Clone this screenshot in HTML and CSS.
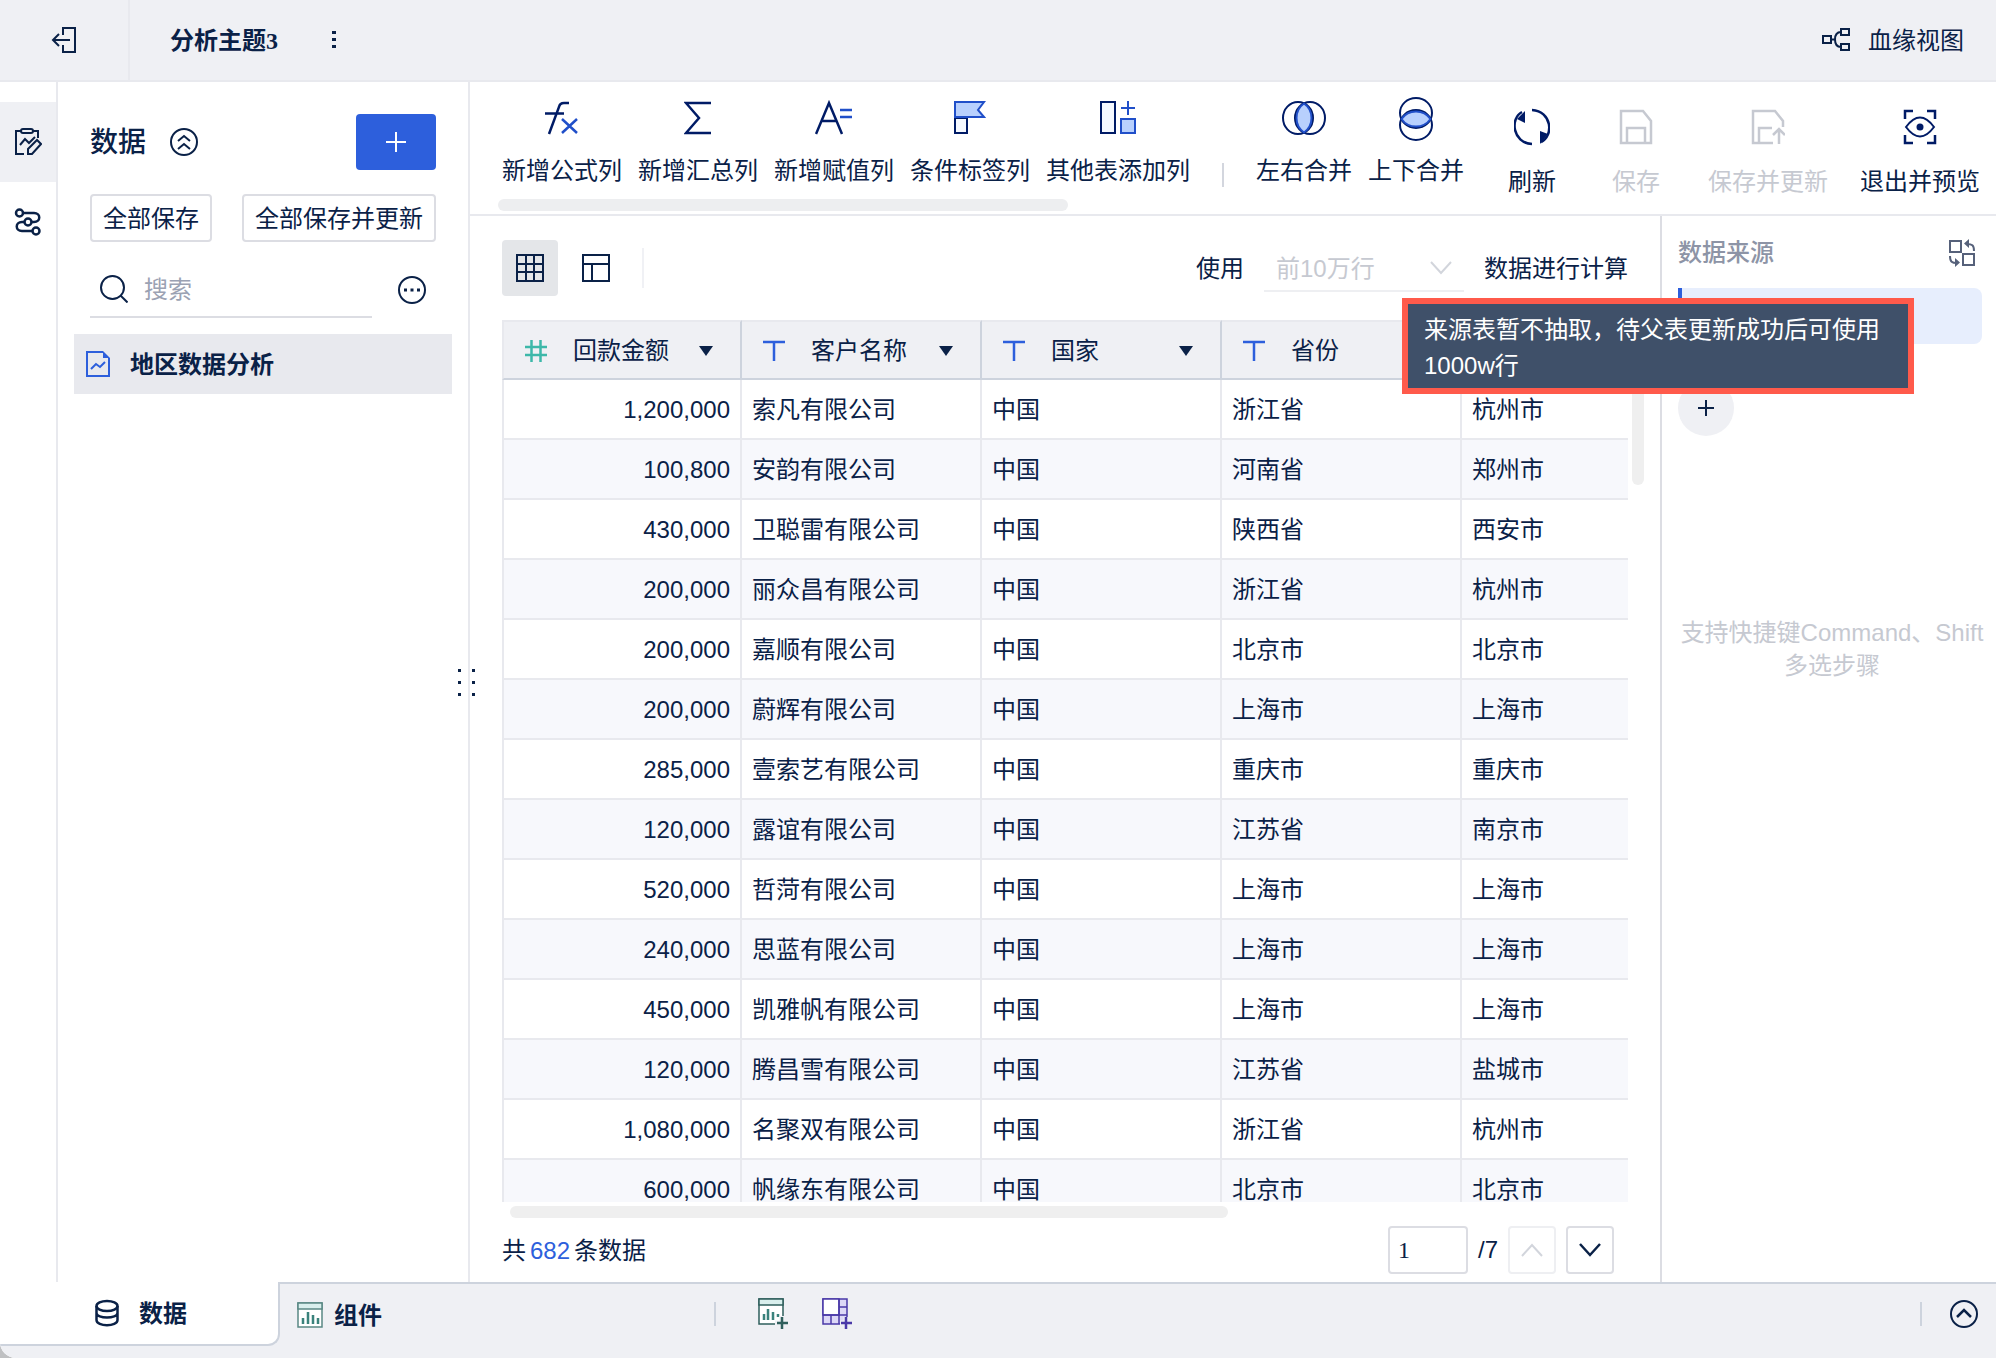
FILE: index.html
```html
<!DOCTYPE html>
<html lang="zh-CN">
<head>
    <meta charset="UTF-8" />
    <meta name="viewport" content="width=device-width, initial-scale=1.0" />
    <title>分析主题3</title>
    <link rel="stylesheet" href="styles.css">
</head>
<body>
<div class="app">
    <header class="topbar">
        <button class="exit" aria-label="退出">
            <svg width="28" height="28" viewBox="0 0 28 28" fill="none" stroke="currentColor" stroke-width="2"><path d="M13 9V2h12v24H13v-7M20 14H3M9 8l-6 6 6 6"/></svg>
        </button>
        <h1 class="title">分析主题3</h1>
        <button class="more" aria-label="更多">
            <svg width="4" height="18" viewBox="0 0 4 18" fill="currentColor"><path d="M0 0h4v3H0zM0 7h4v3H0zM0 14h4v3H0z"/></svg>
        </button>
        <a class="lineage" href="#">
            <svg width="28" height="26" viewBox="0 0 28 26" fill="none" stroke="currentColor" stroke-width="2"><path d="M1 9h8v7H1zM19 2h8v6h-8zM19 17h8v6h-8zM9 12.500h4M19 5c-4 0-6 2-6 7.500S15 20 19 20"/></svg>
            <span>血缘视图</span>
        </a>
    </header>

    <div class="body">
        <nav class="rail">
            <a class="rail-item active" href="#" aria-label="编辑">
                <svg width="28" height="28" viewBox="0 0 28 28" fill="none" stroke="currentColor" stroke-width="2"><path d="M7 3H2v23h8M19 3h5v7"/><rect x="7" y="1" width="12" height="4" rx="2"/><path d="M6 17l5-6 4 4 6-6M14 26v-5l9-9 4 4-9 10z"/></svg>
            </a>
            <a class="rail-item" href="#" aria-label="流程">
                <svg width="28" height="28" viewBox="0 0 28 28" fill="none" stroke="currentColor" stroke-width="2.500"><circle cx="5.500" cy="5" r="3.500"/><circle cx="14" cy="14" r="3.500"/><circle cx="22" cy="23" r="3.500"/><path d="M9 5h11c7 0 7 9 0 9h-2.500M10.500 14H8c-7 0-7 9 0 9h10.500"/></svg>
            </a>
        </nav>

        <aside class="sidebar">
            <div class="sidebar-head">
                <h2>数据</h2>
                <button class="icon-btn" aria-label="收起">
                    <svg width="28" height="28" viewBox="0 0 28 28" fill="none" stroke="currentColor" stroke-width="2"><circle cx="14" cy="14" r="13"/><path d="M8 13l6-5 6 5M8 21l6-5 6 5"/></svg>
                </button>
                <button class="add-btn" aria-label="添加">
                    <svg width="20" height="20" viewBox="0 0 20 20" fill="none" stroke="currentColor" stroke-width="2"><path d="M0 10h20M10 0v20"/></svg>
                </button>
            </div>
            <div class="save-row">
                <button class="plain-btn">全部保存</button>
                <button class="plain-btn">全部保存并更新</button>
            </div>
            <div class="search-row">
                <label class="search">
                    <svg width="28" height="28" viewBox="0 0 28 28" fill="none" stroke="currentColor" stroke-width="2"><circle cx="12.500" cy="12.500" r="11.500"/><path d="M20.500 20.500l7 7"/></svg>
                    <input type="text" placeholder="搜索" aria-label="搜索">
                </label>
                <button class="icon-btn" aria-label="更多操作">
                    <svg width="28" height="28" viewBox="0 0 28 28" fill="none" stroke="currentColor" stroke-width="2"><circle cx="14" cy="14" r="13"/><path d="M6 14h3M12.500 14h3M19 14h3" stroke-width="3"/></svg>
                </button>
            </div>
            <a class="file-item" href="#">
                <svg width="26" height="28" viewBox="0 0 26 28" fill="none" stroke="#2d5fdc" stroke-width="2"><path d="M18 2H2v24h22V8"/><path d="M18 1l7 7h-7z" fill="#2d5fdc" stroke="none"/><path d="M6 19l5-5 4 3 5-5"/></svg>
                <span>地区数据分析</span>
            </a>
        </aside>

        <div class="workspace">
            <div class="toolbar">
                <div class="tools">
                    <button class="tool">
                        <svg width="36" height="46" viewBox="0 0 36 46" fill="none" stroke="#001b66" stroke-width="2.500"><path d="M25 7h-5c-3 0-4.500 1.500-5 4L5 38M1 17.500h19" /><path d="M18 23l15 14M33 23L18 37" stroke="#204fc9"/></svg>
                        新增公式列
                    </button>
                    <button class="tool">
                        <svg width="28" height="46" viewBox="0 0 28 46" fill="none" stroke="#001b66" stroke-width="2.500"><path d="M27 7H2l13 15L2 37h25"/></svg>
                        新增汇总列
                    </button>
                    <button class="tool">
                        <svg width="38" height="46" viewBox="0 0 38 46" fill="none" stroke="#001b66" stroke-width="2.500"><path d="M1 38L14 7l13 31M6 25h16"/><path d="M25 14h12M25 21h12" stroke="#204fc9"/></svg>
                        新增赋值列
                    </button>
                    <button class="tool">
                        <svg width="32" height="46" viewBox="0 0 32 46" stroke="#001b66" stroke-width="2"><path d="M1 22h12v15H1z" fill="#f5f9ff"/><path d="M1 6h29l-6 8 6 7H1z" fill="#b8d0fd" stroke="#204fc9"/></svg>
                        条件标签列
                    </button>
                    <button class="tool">
                        <svg width="36" height="46" viewBox="0 0 36 46" stroke="#001b66" stroke-width="2"><path d="M1 6h14v31H1z" fill="#f5f9ff"/><path d="M21 23h14v14H21z" fill="#b8d0fd" stroke="#204fc9"/><path d="M28 5v14M21 12h14" stroke="#204fc9"/></svg>
                        其他表添加列
                    </button>
                    <span class="tool-divider"></span>
                    <button class="tool">
                        <svg width="44" height="46" viewBox="0 0 44 46" fill="none" stroke="#001b66" stroke-width="2"><ellipse cx="16" cy="22" rx="15" ry="16"/><ellipse cx="28" cy="22" rx="15" ry="16"/><path d="M22 7.500c10 7 10 22 0 29-10-7-10-22 0-29z" fill="#b8d0fd" stroke="#204fc9"/></svg>
                        左右合并
                    </button>
                    <button class="tool">
                        <svg width="36" height="46" viewBox="0 0 36 46" fill="none" stroke="#001b66" stroke-width="2"><ellipse cx="18" cy="17" rx="16" ry="15"/><ellipse cx="18" cy="29" rx="16" ry="15"/><path d="M3.500 23c7-10 22-10 29 0-7 10-22 10-29 0z" fill="#b8d0fd" stroke="#204fc9"/></svg>
                        上下合并
                    </button>
                    <div class="tools-scroll"></div>
                </div>
                <div class="actions">
                    <button class="action refresh">
                        <svg width="36" height="38" viewBox="0 0 36 38" fill="none" stroke="#001b66" stroke-width="2.500"><path d="M18 2c20 1 22 26 9 32M18 36C-2 35-4 10 8 4"/><path d="M3 11l8-8v12zM26 23l8 3-8 10z" fill="#001b66" stroke="none"/></svg>
                        刷新
                    </button>
                    <button class="action save" disabled>
                        <svg width="34" height="38" viewBox="0 0 34 38" fill="none" stroke="currentColor" stroke-width="2.500"><path d="M2 3h22l8 10v22H2zM8 35V20h18v15"/></svg>
                        保存
                    </button>
                    <button class="action" disabled>
                        <svg width="34" height="38" viewBox="0 0 34 38" fill="none" stroke="currentColor" stroke-width="2.500"><path d="M22 35H2V3h22l8 10v6M8 35V20h13M28 36V22M22 27l6-6 6 6"/></svg>
                        保存并更新
                    </button>
                    <button class="action">
                        <svg width="34" height="38" viewBox="0 0 34 38" fill="none" stroke="#001b66" stroke-width="2.500"><path d="M2 11V3h8M24 3h8v8M32 27v8h-8M10 35H2v-8"/><path d="M3 19q14-19 28 0-14 19-28 0z" stroke-width="2"/><circle cx="17" cy="19" r="3.500" fill="#001b66" stroke="none"/></svg>
                        退出并预览
                    </button>
                </div>
            </div>

            <div class="content">
                <main class="main">
                    <div class="view-row">
                        <button class="view-btn active" aria-label="表格视图">
                            <svg width="28" height="28" viewBox="0 0 28 28" fill="none" stroke="currentColor" stroke-width="2"><path d="M1 1h26v26H1zM1 10h26M1 18h26M10 1v26M18 1v26"/></svg>
                        </button>
                        <button class="view-btn" aria-label="布局视图">
                            <svg width="28" height="28" viewBox="0 0 28 28" fill="none" stroke="currentColor" stroke-width="2"><path d="M1 1h26v26H1zM1 10h26M10 10v17"/></svg>
                        </button>
                        <span class="view-divider"></span>
                        <div class="calc">
                            <label for="rowLimit">使用</label>
                            <span class="select-box">
                                <select id="rowLimit" disabled>
                                    <option>前10万行</option>
                                </select>
                                <svg width="22" height="14" viewBox="0 0 22 14" fill="none" stroke="#d2d5dc" stroke-width="2"><path d="M1 1l10 11L21 1"/></svg>
                            </span>
                            <span>数据进行计算</span>
                        </div>
                    </div>

                    <div class="table-area">
                        <div class="table-wrap">
                            <table>
                                <thead>
                                    <tr>
                                        <th><div class="th"><svg width="22" height="22" viewBox="0 0 22 22" fill="none" stroke="#3db8a9" stroke-width="2.500"><path d="M0 7h22M0 15h22M6.500 0v22M15.500 0v22"/></svg>回款金额<i class="caret"></i></div></th>
                                        <th><div class="th"><svg width="22" height="22" viewBox="0 0 22 22" fill="none" stroke="#2d5fdc" stroke-width="2.500"><path d="M0 2h22M11 2v19"/></svg>客户名称<i class="caret"></i></div></th>
                                        <th><div class="th"><svg width="22" height="22" viewBox="0 0 22 22" fill="none" stroke="#2d5fdc" stroke-width="2.500"><path d="M0 2h22M11 2v19"/></svg>国家<i class="caret"></i></div></th>
                                        <th><div class="th"><svg width="22" height="22" viewBox="0 0 22 22" fill="none" stroke="#2d5fdc" stroke-width="2.500"><path d="M0 2h22M11 2v19"/></svg>省份<i class="caret"></i></div></th>
                                        <th></th>
                                    </tr>
                                </thead>
                                <tbody>
                                    <tr><td>1,200,000</td><td>索凡有限公司</td><td>中国</td><td>浙江省</td><td>杭州市</td></tr>
                                    <tr><td>100,800</td><td>安韵有限公司</td><td>中国</td><td>河南省</td><td>郑州市</td></tr>
                                    <tr><td>430,000</td><td>卫聪雷有限公司</td><td>中国</td><td>陕西省</td><td>西安市</td></tr>
                                    <tr><td>200,000</td><td>丽众昌有限公司</td><td>中国</td><td>浙江省</td><td>杭州市</td></tr>
                                    <tr><td>200,000</td><td>嘉顺有限公司</td><td>中国</td><td>北京市</td><td>北京市</td></tr>
                                    <tr><td>200,000</td><td>蔚辉有限公司</td><td>中国</td><td>上海市</td><td>上海市</td></tr>
                                    <tr><td>285,000</td><td>壹索艺有限公司</td><td>中国</td><td>重庆市</td><td>重庆市</td></tr>
                                    <tr><td>120,000</td><td>露谊有限公司</td><td>中国</td><td>江苏省</td><td>南京市</td></tr>
                                    <tr><td>520,000</td><td>哲菏有限公司</td><td>中国</td><td>上海市</td><td>上海市</td></tr>
                                    <tr><td>240,000</td><td>思蓝有限公司</td><td>中国</td><td>上海市</td><td>上海市</td></tr>
                                    <tr><td>450,000</td><td>凯雅帆有限公司</td><td>中国</td><td>上海市</td><td>上海市</td></tr>
                                    <tr><td>120,000</td><td>腾昌雪有限公司</td><td>中国</td><td>江苏省</td><td>盐城市</td></tr>
                                    <tr><td>1,080,000</td><td>名聚双有限公司</td><td>中国</td><td>浙江省</td><td>杭州市</td></tr>
                                    <tr><td>600,000</td><td>帆缘东有限公司</td><td>中国</td><td>北京市</td><td>北京市</td></tr>
                                </tbody>
                            </table>
                        </div>
                        <div class="v-scroll"></div>
                    </div>
                    <div class="h-scroll"></div>

                    <div class="pager">
                        <p class="total">共<b>682</b>条数据</p>
                        <input type="text" value="1" aria-label="页码">
                        <span>/7</span>
                        <button class="page-btn" disabled aria-label="上一页">
                            <svg width="22" height="14" viewBox="0 0 22 14" fill="none" stroke="currentColor" stroke-width="2"><path d="M1 13L11 2l10 11"/></svg>
                        </button>
                        <button class="page-btn" aria-label="下一页">
                            <svg width="22" height="14" viewBox="0 0 22 14" fill="none" stroke="currentColor" stroke-width="2.500"><path d="M1 1l10 11L21 1"/></svg>
                        </button>
                    </div>
                </main>

                <aside class="source">
                    <div class="source-head">
                        <h3>数据来源</h3>
                        <button class="icon-btn" aria-label="切换">
                            <svg width="26" height="28" viewBox="0 0 26 28" fill="none" stroke="#56617a" stroke-width="2"><path d="M1 2h11v11H1zM14 15h11v11H14zM25 12c0-6-2-7-7-7M1 17c0 6 2 7 7 7"/><path d="M20 0v9l-5-4.500zM6 19v9l5-4.500z" fill="#56617a" stroke="none"/></svg>
                        </button>
                    </div>
                    <div class="source-card"></div>
                    <button class="step-add" aria-label="添加步骤">
                        <svg width="16" height="16" viewBox="0 0 16 16" fill="none" stroke="currentColor" stroke-width="2"><path d="M0 8h16M8 0v16"/></svg>
                    </button>
                    <p class="hint">支持快捷键Command、Shift多选步骤</p>
                </aside>

                <div class="tooltip" role="tooltip">来源表暂不抽取，待父表更新成功后可使用1000w行</div>
            </div>

            <div class="drag"><i></i><i></i><i></i><i></i><i></i><i></i></div>
        </div>
    </div>

    <footer class="tabbar">
        <a class="tab active" href="#">
            <svg width="24" height="28" viewBox="0 0 24 28" fill="none" stroke="currentColor" stroke-width="2.500"><ellipse cx="12" cy="7" rx="10.500" ry="5"/><path d="M1.500 7v14c0 7 21 7 21 0V7M1.500 14c0 6 21 6 21 0"/></svg>
            <span>数据</span>
        </a>
        <a class="tab component" href="#">
            <svg width="26" height="26" viewBox="0 0 26 26" fill="#fff" stroke="#5a8884" stroke-width="1.500"><path d="M1 1h24v24H1z"/><path d="M1 1h24v6H1z" fill="#d9efed"/><path d="M6 22v-6M11 22V10M16 22v-9M21 22v-6" stroke="#3a827c" stroke-width="2.500"/></svg>
            <span>组件</span>
        </a>
        <span class="bar-divider"></span>
        <button class="icon-btn" aria-label="添加组件">
            <svg width="30" height="32" viewBox="0 0 30 32" fill="#fff" stroke="#2f5f5c" stroke-width="1.500"><path d="M1 1h24v25H1z"/><path d="M1 1h24v6H1z" fill="#d9efed"/><path d="M6 22v-6M10 22V11M15 22v-8M20 19v-3" stroke="#3a827c" stroke-width="2.500"/><path d="M24 18v14M17 25h13" stroke="#eff0f4" stroke-width="5"/><path d="M24 19v12M19 25h11" stroke-width="2.500"/></svg>
        </button>
        <button class="icon-btn" aria-label="添加仪表板">
            <svg width="30" height="32" viewBox="0 0 30 32" fill="#ddd8f7" stroke="#4a39a8" stroke-width="1.500"><path d="M1 1h24v25H1z"/><path d="M1 1h16v16H1z" fill="#fff"/><path d="M1 17h24M17 1v25M17 9h8M9 17v9"/><path d="M24 19v13M18 25h12" stroke="#eff0f4" stroke-width="5"/><path d="M24 19v12M19 25h11" stroke-width="2.500"/></svg>
        </button>
        <span class="bar-divider right"></span>
        <button class="icon-btn expand" aria-label="展开">
            <svg width="28" height="28" viewBox="0 0 28 28" fill="none" stroke="currentColor" stroke-width="2"><circle cx="14" cy="14" r="13"/><path d="M7 17l7-7 7 7" stroke-width="2.500"/></svg>
        </button>
    </footer>
</div>
</body>
</html>
```

FILE: styles.css
```css
* { margin: 0; padding: 0; box-sizing: border-box; }
body {
    background: #bfc0c2;
    color: #0a2147;
    font-family: "Liberation Sans", "Noto Sans CJK SC", sans-serif;
    font-size: 24px;
    line-height: 36px;
}
button, input, select { font: inherit; color: inherit; }
button { background: none; border: none; cursor: pointer; }
a { color: inherit; text-decoration: none; }
svg { display: block; flex: none; }
.app {
    display: flex;
    flex-direction: column;
    height: 100vh;
    background: #fff;
    border-bottom-left-radius: 16px;
    overflow: hidden;
}

/* top bar */
.topbar {
    display: flex;
    align-items: center;
    height: 82px;
    flex: none;
    background: #eff0f4;
    border-bottom: 2px solid #e8e9ee;
}
.exit {
    display: flex;
    align-items: center;
    justify-content: center;
    width: 130px;
    height: 80px;
    border-right: 2px solid #e8e9ee;
}
.title {
    margin-left: 40px;
    padding-top: 2px;
    font-family: "Liberation Serif", "Noto Sans CJK SC", serif;
    font-size: 24px;
    font-weight: 700;
}
.more { padding: 0 54px; }
.lineage {
    display: flex;
    align-items: center;
    gap: 18px;
    margin-left: auto;
    padding-right: 32px;
}
.lineage span, .file-item span, .tab span { padding-top: 2px; }

.body { display: flex; flex: 1; min-height: 0; }

/* left rail */
.rail {
    width: 58px;
    flex: none;
    padding-top: 20px;
    border-right: 2px solid #e8e9ee;
}
.rail-item {
    display: flex;
    align-items: center;
    justify-content: center;
    height: 80px;
}
.rail-item.active { background: #eff0f4; }

/* sidebar */
.sidebar {
    width: 412px;
    flex: none;
    padding: 32px 16px;
    border-right: 2px solid #e8e9ee;
}
.sidebar-head, .save-row, .search-row {
    display: flex;
    align-items: center;
    justify-content: space-between;
    padding: 0 16px;
}
.sidebar-head { gap: 24px; }
.sidebar-head h2 { padding-top: 2px; font-size: 28px; font-weight: 500; }
.add-btn {
    display: flex;
    align-items: center;
    justify-content: center;
    width: 80px;
    height: 56px;
    margin-left: auto;
    border-radius: 4px;
    background: #2d5fdc;
    color: #fff;
}
.save-row { margin-top: 24px; }
.plain-btn {
    height: 48px;
    padding: 2px 11px 0;
    border: 2px solid #dcdde3;
    border-radius: 4px;
    background: #fff;
}
.search-row { margin-top: 20px; padding-right: 26px; }
.search {
    display: flex;
    align-items: center;
    gap: 16px;
    width: 282px;
    height: 56px;
    padding-left: 10px;
    border-bottom: 2px solid #dcdde3;
}
.search input {
    width: 100%;
    padding-top: 2px;
    border: none;
    outline: none;
    background: none;
}
.search input::placeholder { color: #9ba2b3; opacity: 1; }
.file-item {
    display: flex;
    align-items: center;
    gap: 19px;
    height: 60px;
    margin-top: 16px;
    padding-left: 11px;
    background: #e8e9ee;
    font-weight: 600;
}

/* toolbar */
.workspace {
    position: relative;
    display: flex;
    flex-direction: column;
    flex: 1;
    min-width: 0;
}
.toolbar {
    display: flex;
    justify-content: space-between;
    height: 134px;
    flex: none;
    border-bottom: 2px solid #e8e9ee;
}
.tools {
    position: relative;
    display: flex;
    gap: 16px;
    padding: 14px 0 0 32px;
}
.tool, .action {
    display: flex;
    flex-direction: column;
    align-items: center;
    white-space: nowrap;
}
.tool { height: 93px; gap: 11px; }
.tool-divider {
    width: 2px;
    height: 24px;
    margin: 67px 16px 0;
    background: #d3d6de;
}
.tools-scroll {
    position: absolute;
    left: 28px;
    bottom: 3px;
    width: 570px;
    height: 12px;
    border-radius: 6px;
    background: #edeef0;
}
.actions { display: flex; padding-top: 26px; }
.action { height: 92px; gap: 18px; padding: 0 16px; }
.action.refresh { min-width: 96px; }
.action.save { min-width: 112px; }
.action:disabled { color: #c6c9d1; cursor: default; }

.content { position: relative; display: flex; flex: 1; min-height: 0; }
.main {
    display: flex;
    flex-direction: column;
    flex: 1;
    min-width: 0;
    padding: 0 32px;
    border-right: 2px solid #dcdde3;
}
.view-row { display: flex; align-items: center; padding: 24px 0; gap: 10px; }
.view-btn {
    display: flex;
    align-items: center;
    justify-content: center;
    width: 56px;
    height: 56px;
    border-radius: 4px;
}
.view-btn.active { background: #e4e6e9; }
.view-divider { width: 2px; height: 40px; margin-left: 8px; background: #f0f1f5; }
.calc {
    display: flex;
    align-items: center;
    gap: 20px;
    margin-left: auto;
    padding-top: 2px;
}
.select-box {
    display: flex;
    align-items: center;
    width: 200px;
    padding-right: 12px;
    border-bottom: 2px solid #eeeff2;
}
.select-box select {
    flex: 1;
    height: 44px;
    padding: 2px 0 0 12px;
    border: none;
    appearance: none;
    background: none;
    color: #c6c9d1;
    opacity: 1;
}

/* data table */
.table-area { position: relative; flex: 1; min-height: 0; }
.table-wrap { height: 100%; overflow: hidden; }
table {
    width: 1200px;
    table-layout: fixed;
    border-collapse: separate;
    border-spacing: 0;
}
th, td {
    height: 60px;
    border-right: 2px solid #e8e9ee;
    border-bottom: 2px solid #e8e9ee;
    white-space: nowrap;
}
th:first-child, td:first-child { border-left: 2px solid #e8e9ee; }
th {
    background: #eff0f4;
    border-top: 2px solid #e8e9ee;
    border-right-color: #cdd3dd;
    border-bottom-color: #cdd3dd;
    font-weight: 400;
}
td { padding: 2px 10px 0; }
td:first-child { text-align: right; }
tbody tr:nth-child(even) { background: #f7f8fc; }
.th { display: flex; align-items: center; padding: 1px 27px 0 21px; gap: 26px; }
.caret {
    margin-left: auto;
    border: 7px solid transparent;
    border-top: 10px solid #0a2147;
    border-bottom: 0;
}
.v-scroll {
    position: absolute;
    top: 66px;
    right: -16px;
    width: 12px;
    height: 99px;
    border-radius: 6px;
    background: #efefef;
}
.h-scroll {
    width: 718px;
    height: 12px;
    margin: 4px 0 8px 8px;
    flex: none;
    border-radius: 6px;
    background: #efefef;
}
.pager {
    display: flex;
    align-items: center;
    gap: 10px;
    margin-bottom: 8px;
    padding-right: 14px;
}
.total { margin-right: auto; padding-top: 2px; }
.total b { margin: 0 4px; color: #2d5fdc; font-weight: 400; }
.pager input {
    width: 80px;
    height: 48px;
    padding: 0 8px;
    border: 2px solid #dcdde3;
    border-radius: 4px;
    font-family: "Liberation Serif", serif;
}
.page-btn {
    display: flex;
    align-items: center;
    justify-content: center;
    width: 48px;
    height: 48px;
    border: 2px solid #dcdde3;
    border-radius: 4px;
}
.page-btn:disabled { color: #d2d5dc; border-color: #eeeff2; }

/* source panel */
.source { width: 334px; flex: none; padding: 19px 14px 0 16px; }
.source-head {
    display: flex;
    align-items: center;
    justify-content: space-between;
    padding-right: 7px;
}
.source-head h3 { font-size: 24px; font-weight: 500; color: #8d94a6; }
.source-card {
    height: 56px;
    margin-top: 17px;
    border-left: 4px solid #2d5fdc;
    border-radius: 0 8px 8px 0;
    background: #e7eefd;
}
.step-add {
    display: flex;
    align-items: center;
    justify-content: center;
    width: 56px;
    height: 56px;
    margin-top: 36px;
    border-radius: 50%;
    background: #eff0f4;
}
.hint {
    margin: 180px -8px 0 -4px;
    line-height: 33px;
    color: #c6c9d1;
    text-align: center;
}
.tooltip {
    position: absolute;
    top: 82px;
    right: 82px;
    width: 512px;
    padding: 8px 16px 4px;
    border: 6px solid #ff5a4b;
    background: #3f5069;
    color: #fff;
}
.drag {
    position: absolute;
    top: 587px;
    left: -12px;
    display: grid;
    grid-template-columns: 3px 3px;
    gap: 9px 11px;
}
.drag i { height: 3px; background: #0a2147; }

/* bottom tabs */
.tabbar {
    display: flex;
    align-items: flex-start;
    height: 76px;
    flex: none;
    background: #eff0f4;
    border-top: 2px solid #cdd3dd;
}
.tab { display: flex; align-items: center; height: 62px; font-weight: 600; }
.tab.active {
    width: 280px;
    height: 64px;
    margin-top: -2px;
    padding-left: 95px;
    gap: 20px;
    border: solid #cdd3dd;
    border-width: 0 2px 2px 0;
    border-radius: 0 0 12px 0;
    background: #fff;
}
.tab.component { width: 434px; padding-left: 17px; gap: 11px; }
.bar-divider { width: 2px; height: 24px; margin: 18px 0 0; background: #cdd3dd; }
.tabbar .icon-btn { margin: 14px 0 0 34px; }
.tabbar .icon-btn:nth-of-type(1) { margin-left: 42px; }
.bar-divider.right { margin-left: auto; }
.tabbar .icon-btn.expand { margin: 16px 18px 0 28px; }
```
